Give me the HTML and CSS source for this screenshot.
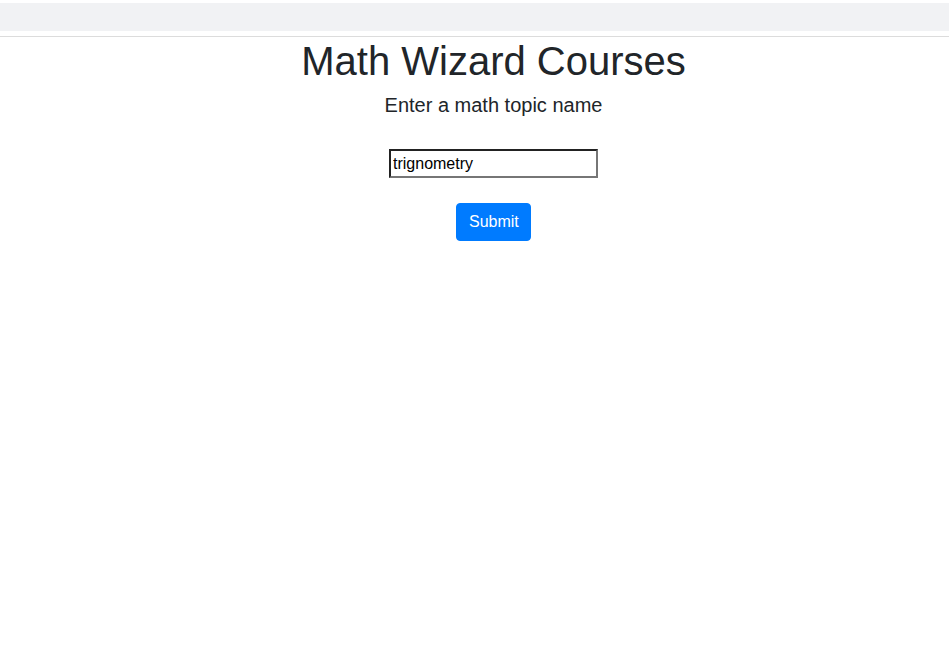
FILE: index.html
```html
<!DOCTYPE html>
<html>
<head>
<meta charset="utf-8">
<link rel="stylesheet" href="styles.css">
</head>
<body>
<div class="topbar"></div>
<div class="rule"></div>
<main class="main">
  <h1 class="title">Math Wizard Courses</h1>
  <h5 class="subtitle">Enter a math topic name</h5>
  <form class="form">
    <input class="topic" type="text" value="trignometry">
    <button class="btn" type="button">Submit</button>
  </form>
</main>
</body>
</html>
```

FILE: styles.css
```css
html, body {
  margin: 0;
  padding: 0;
  background: #fff;
}
body {
  font-family: "Liberation Sans", Arial, sans-serif;
  color: #212529;
}
.topbar {
  margin-top: 3px;
  height: 28px;
  background: #f1f2f4;
}
.rule {
  margin-top: 5px;
  height: 0;
  border-top: 1px solid #dcdcdc;
}
.main {
  padding-left: 38px;
  display: flex;
  flex-direction: column;
  align-items: center;
}
.title {
  margin: 0 0 8px;
  font-size: 40px;
  line-height: 1.2;
  font-weight: 400;
}
.subtitle {
  margin: 0;
  font-size: 20px;
  line-height: 1.2;
  font-weight: 400;
}
.form {
  margin-top: 32px;
  display: flex;
  flex-direction: column;
  align-items: center;
}
.topic {
  box-sizing: border-box;
  width: 209px;
  height: 29px;
  padding: 1px 2px;
  font-family: "Liberation Sans", Arial, sans-serif;
  font-size: 16px;
  color: #000;
  border-width: 2px;
  border-style: solid;
  border-color: #222 #767676 #767676 #222;
  outline: none;
  margin: 0;
}
.btn {
  margin-top: 25px;
  box-sizing: border-box;
  height: 38px;
  width: 75px;
  padding: 6px 12px;
  font-family: "Liberation Sans", Arial, sans-serif;
  font-size: 16px;
  line-height: 24px;
  color: #fff;
  background: #007bff;
  border: 1px solid #007bff;
  border-radius: 4px;
}
```
